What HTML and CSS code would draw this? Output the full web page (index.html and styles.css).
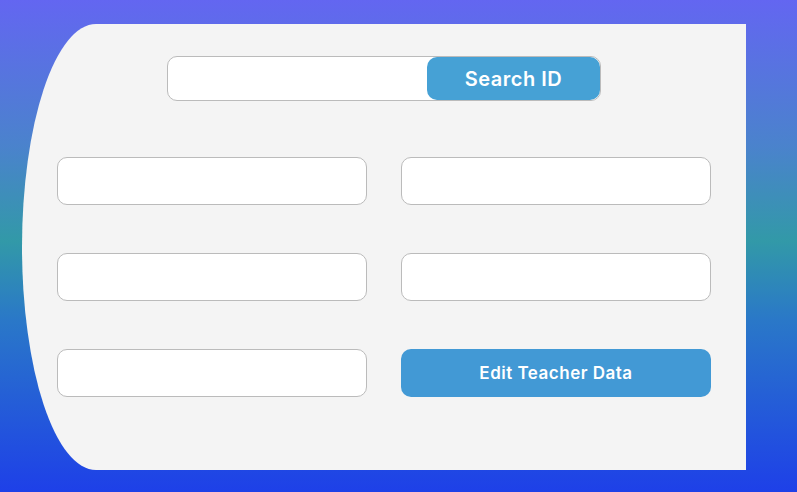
FILE: index.html
```html
<!DOCTYPE html>
<html>
<head>
<meta charset="utf-8">
<link rel="stylesheet" href="styles.css">
</head>
<body>
<div class="page">
  <div class="card">
    <form class="search">
      <input class="search-input" type="text">
      <button class="search-btn" type="button">Search ID</button>
    </form>
    <div class="grid">
      <input class="field" type="text">
      <input class="field" type="text">
      <input class="field" type="text">
      <input class="field" type="text">
      <input class="field" type="text">
      <button class="edit-btn" type="button">Edit Teacher Data</button>
    </div>
  </div>
</div>
</body>
</html>
```

FILE: styles.css
```css
html, body {
  margin: 0;
  padding: 0;
  height: 100%;
}
body {
  background: linear-gradient(180deg, #6366f1 0%, #4a83cc 30%, #3299a8 49%, #2a78c8 65%, #1e40e8 100%);
  font-family: Inter, "Open Sans", sans-serif;
}
.page {
  padding: 24px 51px 22px 22px;
  box-sizing: border-box;
  height: 492px;
}
.card {
  width: 724px;
  height: 446px;
  box-sizing: border-box;
  background: #f4f4f4;
  border-radius: 74px 0 0 74px / 223px 0 0 223px;
  padding: 32px 35px 0 35px;
}
.search {
  display: flex;
  width: 434px;
  height: 45px;
  margin: 0 auto;
  box-sizing: border-box;
  border: 1px solid #bbbbbb;
  border-radius: 10px;
  background: #fff;
}
.search-input {
  flex: 1;
  border: none;
  background: transparent;
  outline: none;
  min-width: 0;
  border-radius: 10px;
}
.search-btn {
  width: 173px;
  border: none;
  border-radius: 10px;
  background: #46a1d5;
  color: #fff;
  font-family: Inter, "Open Sans", sans-serif;
  font-size: 20px;
  font-weight: 600;
  letter-spacing: 0.5px;
  padding: 0;
}
.grid {
  margin-top: 56px;
  display: grid;
  grid-template-columns: 310px 310px;
  column-gap: 34px;
  row-gap: 48px;
}
.field, .edit-btn {
  height: 48px;
  box-sizing: border-box;
  border-radius: 10px;
}
.field {
  border: 1px solid #bbbbbb;
  background: #fff;
  outline: none;
}
.edit-btn {
  border: none;
  background: #4299d5;
  color: #fff;
  font-family: Inter, "Open Sans", sans-serif;
  font-size: 17px;
  font-weight: 600;
  letter-spacing: 0.5px;
}
```
